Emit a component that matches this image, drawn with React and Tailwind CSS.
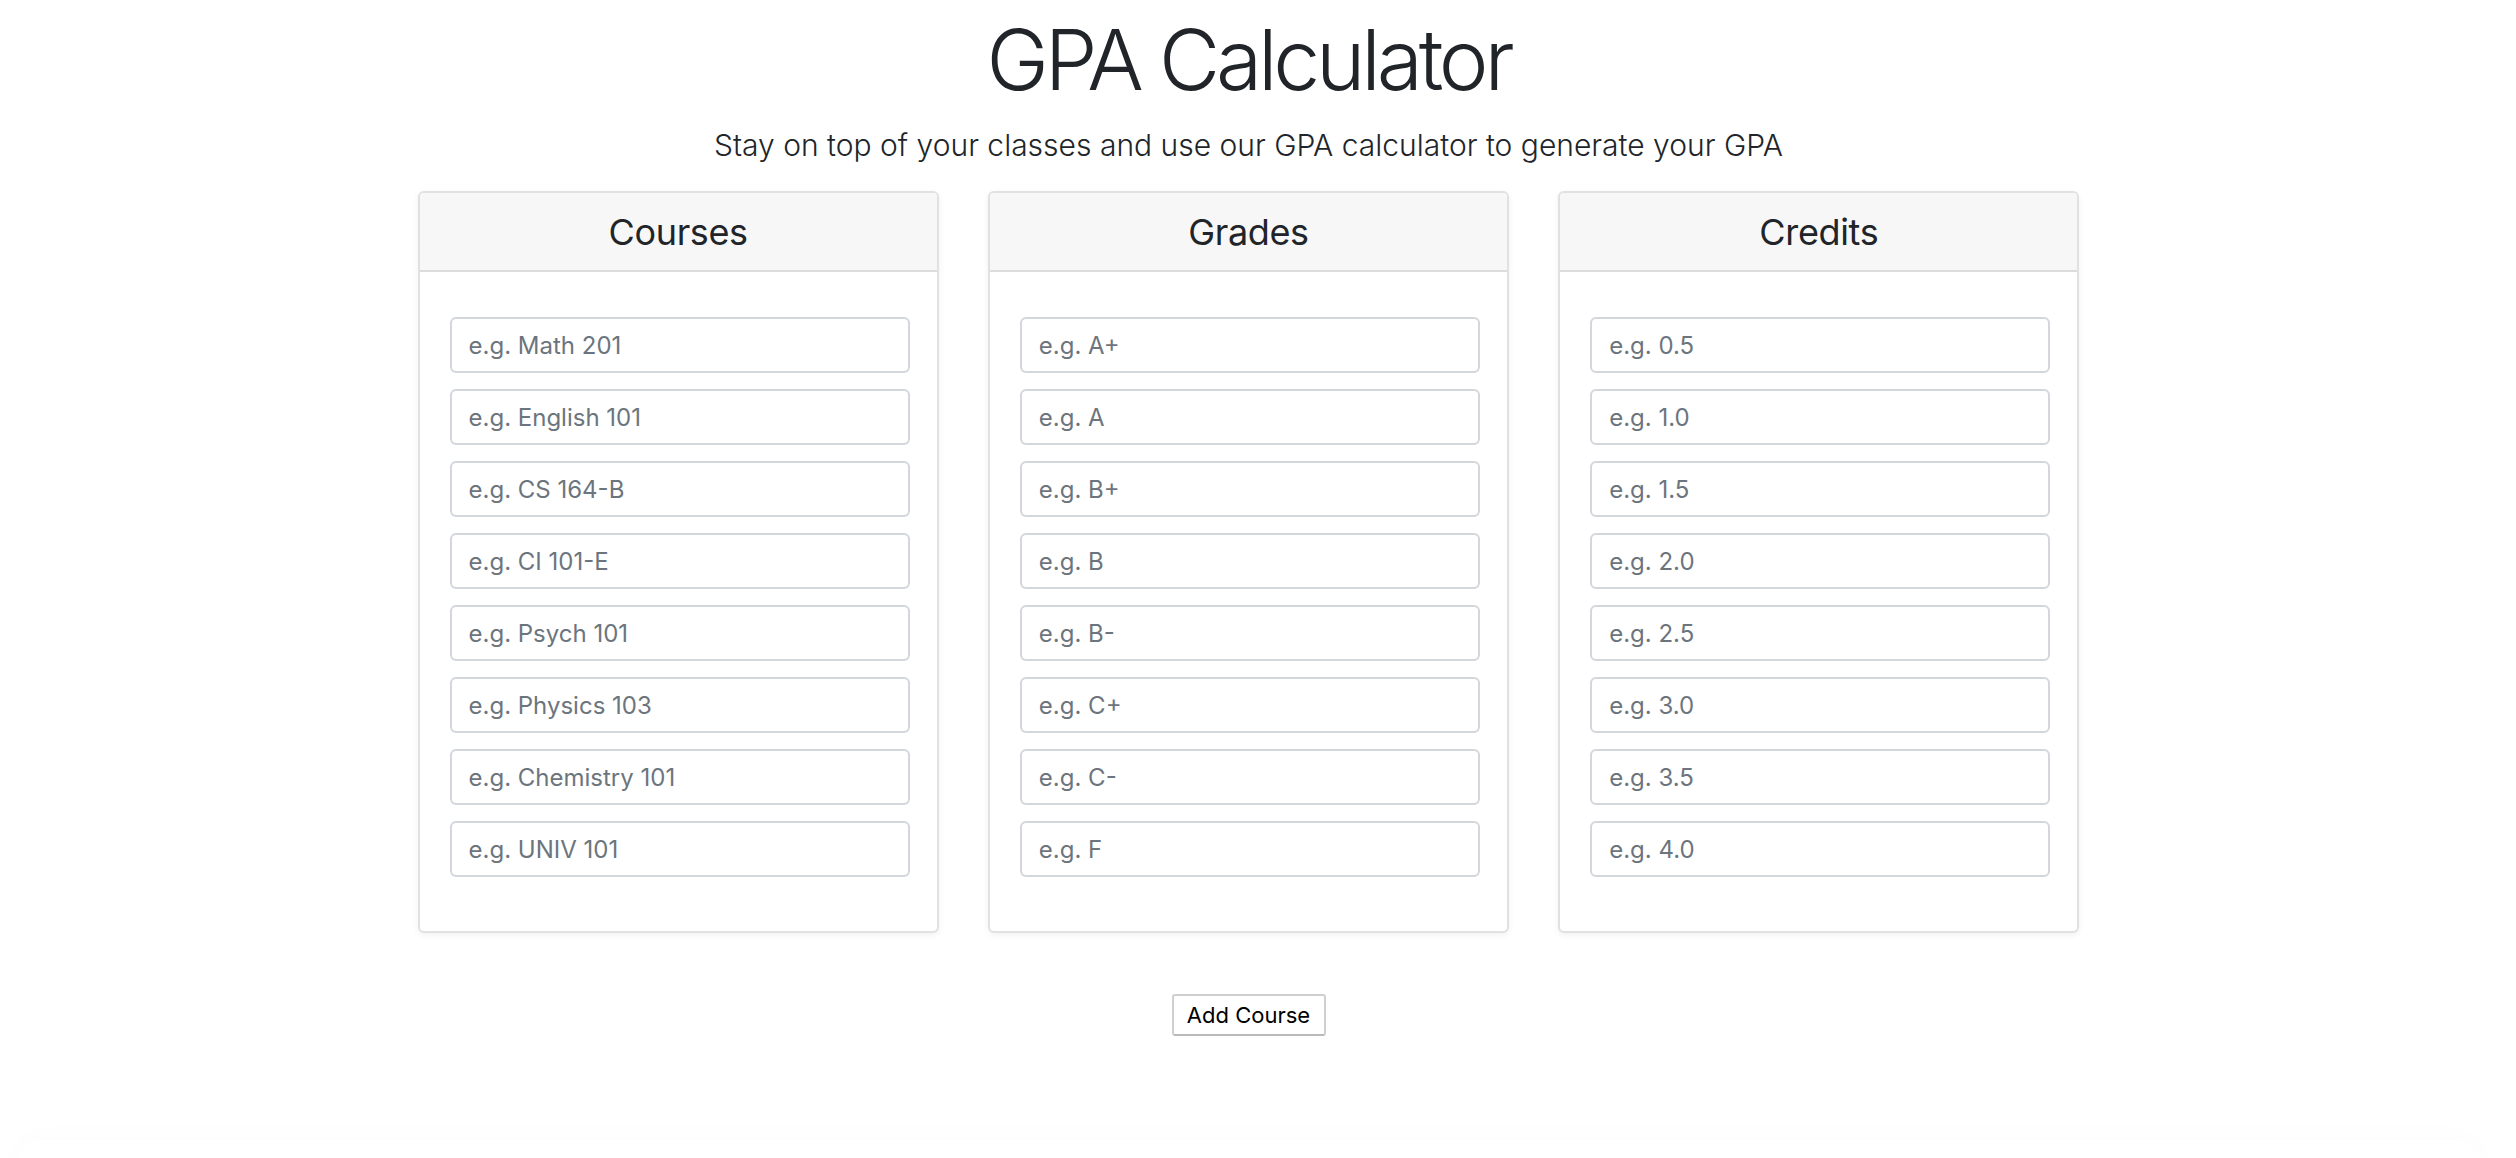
import React, { useState } from 'react';

const columns = [
  {
    title: 'Courses',
    items: ['e.g. Math 201', 'e.g. English 101', 'e.g. CS 164-B', 'e.g. CI 101-E', 'e.g. Psych 101', 'e.g. Physics 103', 'e.g. Chemistry 101', 'e.g. UNIV 101'],
  },
  {
    title: 'Grades',
    items: ['e.g. A+', 'e.g. A', 'e.g. B+', 'e.g. B', 'e.g. B-', 'e.g. C+', 'e.g. C-', 'e.g. F'],
  },
  {
    title: 'Credits',
    items: ['e.g. 0.5', 'e.g. 1.0', 'e.g. 1.5', 'e.g. 2.0', 'e.g. 2.5', 'e.g. 3.0', 'e.g. 3.5', 'e.g. 4.0'],
  },
];

function Card({ title, items }) {
  return (
    <div className="rounded-[6px] border-2 border-[#e1e1e1] bg-white shadow-[0_2px_6px_rgba(0,0,0,0.06)] overflow-hidden">
      <div className="h-[79px] flex items-center justify-center bg-[#f7f7f7] border-b-2 border-[#dcdcdc]">
        <h4 className="text-[36px] leading-none text-[#212529] font-normal tracking-[-0.01em]">{title}</h4>
      </div>
      <div className="pl-[30px] pr-[27px] pt-[45px] pb-[54px] flex flex-col gap-[16px]">
        {items.map((ph) => (
          <input
            key={ph}
            type="text"
            placeholder={ph}
            className="h-[56px] w-full rounded-[6px] border-2 border-[#d3d7dc] bg-white px-[17px] text-[24px] text-[#495057] placeholder:text-[#6c757d] outline-none"
          />
        ))}
      </div>
    </div>
  );
}

export default function App() {
  const [count, setCount] = useState(8);

  return (
    <div className="min-h-[1158px] bg-white pr-[19px] text-[#212529]" style={{ fontFamily: 'Inter, "Noto Sans", sans-serif' }}>
      <div className="flex flex-col items-center">
        <h1 className="pt-[10px] text-[84px] leading-[100px] font-light tracking-[-0.05em]">GPA Calculator</h1>
        <p className="mt-[13px] text-[30px] leading-[45px] font-light">
          Stay on top of your classes and use our GPA calculator to generate your GPA
        </p>

        <div className="mt-[23px] grid grid-cols-3 gap-[49px] w-[1662px]">
          {columns.map((c) => (
            <Card key={c.title} title={c.title} items={c.items.slice(0, count)} />
          ))}
        </div>

        <button
          onClick={() => setCount((n) => n)}
          className="mt-[61px] h-[42px] w-[154px] rounded-[3px] border-2 border-[#cfcfcf] border-b-[#b9b9b9] bg-white text-[22px] text-black"
        >
          Add Course
        </button>

        <div className="mt-[104px] h-[60px] w-[2470px] rounded-[30px] shadow-[0_-4px_30px_rgba(0,0,0,0.015)]" />
      </div>
    </div>
  );
}
